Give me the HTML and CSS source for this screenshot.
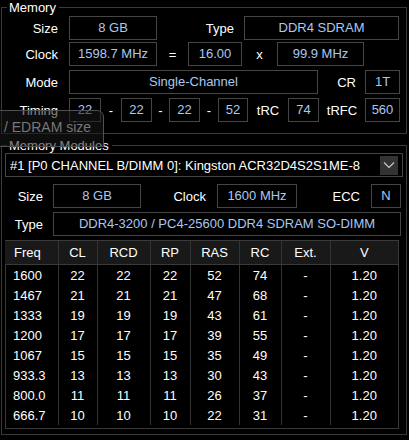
FILE: index.html
```html
<!DOCTYPE html>
<html lang="en">
<head>
    <meta charset="UTF-8">
    <title>Memory</title>
    <link rel="stylesheet" href="styles.css">
</head>
<body>
    <fieldset class="group memory">
        <legend>Memory</legend>
        <div class="row row-size">
            <span class="label lbl-main">Size</span>
            <span class="field w88">8 GB</span>
            <span class="label w77">Type</span>
            <span class="field w155 ml10">DDR4 SDRAM</span>
        </div>
        <div class="row row-clock">
            <span class="label lbl-main">Clock</span>
            <span class="field w88">1598.7 MHz</span>
            <span class="sep w31">=</span>
            <span class="field w54">16.00</span>
            <span class="sep w35">x</span>
            <span class="field w87">99.9 MHz</span>
        </div>
        <div class="row row-mode">
            <span class="label lbl-main">Mode</span>
            <span class="field w249">Single-Channel</span>
            <span class="label w38">CR</span>
            <span class="field w35 ml9">1T</span>
        </div>
        <div class="row row-timing">
            <span class="label lbl-main">Timing</span>
            <span class="field w32">22</span>
            <span class="sep w20">-</span>
            <span class="field w31">22</span>
            <span class="sep w17">-</span>
            <span class="field w31">22</span>
            <span class="sep w18">-</span>
            <span class="field w30">52</span>
            <span class="sep w40">tRC</span>
            <span class="field w31">74</span>
            <span class="sep w46">tRFC</span>
            <span class="field w35">560</span>
        </div>
    </fieldset>

    <fieldset class="group modules">
        <legend>Memory Modules</legend>
        <div class="select">
            <span class="select-text">#1 [P0 CHANNEL B/DIMM 0]: Kingston ACR32D4S2S1ME-8</span>
            <span class="select-btn">
                <svg width="12" height="8" viewBox="0 0 12 8"><path d="M1 1.5 L6 6.5 L11 1.5" fill="none" stroke="#c8c8c8" stroke-width="1.2"/></svg>
            </span>
        </div>
        <div class="row row-msize">
            <span class="label lbl-mod">Size</span>
            <span class="field w88">8 GB</span>
            <span class="label w65">Clock</span>
            <span class="field w80 ml11">1600 MHz</span>
            <span class="label w63">ECC</span>
            <span class="field w30 ml11">N</span>
        </div>
        <div class="row row-mtype">
            <span class="label lbl-mod">Type</span>
            <span class="field w348">DDR4-3200 / PC4-25600 DDR4 SDRAM SO-DIMM</span>
        </div>
        <div class="timings">
            <table>
                <colgroup>
                    <col style="width:53px"><col style="width:39px"><col style="width:53px"><col style="width:40px">
                    <col style="width:49px"><col style="width:42px"><col style="width:49px"><col style="width:68px">
                </colgroup>
                <thead>
                    <tr><th class="first">Freq</th><th>CL</th><th>RCD</th><th>RP</th><th>RAS</th><th>RC</th><th>Ext.</th><th>V</th></tr>
                </thead>
                <tbody>
                    <tr><td class="first">1600</td><td>22</td><td>22</td><td>22</td><td>52</td><td>74</td><td>-</td><td>1.20</td></tr>
                    <tr><td class="first">1467</td><td>21</td><td>21</td><td>21</td><td>47</td><td>68</td><td>-</td><td>1.20</td></tr>
                    <tr><td class="first">1333</td><td>19</td><td>19</td><td>19</td><td>43</td><td>61</td><td>-</td><td>1.20</td></tr>
                    <tr><td class="first">1200</td><td>17</td><td>17</td><td>17</td><td>39</td><td>55</td><td>-</td><td>1.20</td></tr>
                    <tr><td class="first">1067</td><td>15</td><td>15</td><td>15</td><td>35</td><td>49</td><td>-</td><td>1.20</td></tr>
                    <tr><td class="first">933.3</td><td>13</td><td>13</td><td>13</td><td>30</td><td>43</td><td>-</td><td>1.20</td></tr>
                    <tr><td class="first">800.0</td><td>11</td><td>11</td><td>11</td><td>26</td><td>37</td><td>-</td><td>1.20</td></tr>
                    <tr><td class="first">666.7</td><td>10</td><td>10</td><td>10</td><td>22</td><td>31</td><td>-</td><td>1.20</td></tr>
                </tbody>
            </table>
        </div>
    </fieldset>

    <div class="ghost">/ EDRAM size</div>
</body>
</html>
```

FILE: styles.css
```css
body {
    margin: 0;
    background-color: #000;
    color: #fff;
    font-family: "Liberation Sans", Arial, sans-serif;
    font-size: 13px;
    width: 409px;
    height: 440px;
    overflow: hidden;
    position: relative;
}
.group {
    margin: 0 2px 0 1px;
    padding: 0;
    border: 1px solid #3a3a3a;
    min-width: 0;
}
.group legend {
    margin-left: 5px;
    padding: 0 3px 0 2px;
    line-height: 15px;
}
.memory {
    height: 134px;
    box-sizing: border-box;
}
.modules {
    margin-top: 4px;
    height: 297px;
    box-sizing: border-box;
}
.row {
    display: flex;
    align-items: center;
    height: 24px;
}
.row-size { margin-top: 1px; }
.row-clock { margin-top: 2px; }
.row-mode { margin-top: 4px; }
.row-timing { margin-top: 4px; }
.label {
    text-align: right;
    flex: none;
}
.lbl-main {
    width: 56px;
    margin-right: 11px;
}
.lbl-mod {
    width: 41px;
    margin-right: 10px;
}
.field {
    flex: none;
    box-sizing: border-box;
    height: 24px;
    line-height: 22px;
    border: 1px solid #454545;
    color: #a8c8f2;
    text-align: center;
    white-space: nowrap;
}
.sep {
    flex: none;
    text-align: center;
}
.ml9 { margin-left: 9px; }
.ml10 { margin-left: 10px; }
.ml11 { margin-left: 11px; }
.w17 { width: 17px; }
.w18 { width: 18px; }
.w20 { width: 20px; }
.w30 { width: 30px; }
.w31 { width: 31px; }
.w32 { width: 32px; }
.w35 { width: 35px; }
.w38 { width: 38px; }
.w40 { width: 40px; }
.w46 { width: 46px; }
.w54 { width: 54px; }
.w63 { width: 63px; }
.w65 { width: 65px; }
.w77 { width: 77px; }
.w80 { width: 80px; }
.w87 { width: 87px; }
.w88 { width: 88px; }
.w155 { width: 155px; }
.w249 { width: 249px; }
.w348 { width: 348px; }

.select {
    display: flex;
    align-items: center;
    justify-content: space-between;
    box-sizing: border-box;
    height: 24px;
    margin: 0 3px 0 3px;
    padding: 0 4px 0 4px;
    border: 1px solid #454545;
}
.select-btn {
    display: flex;
    align-items: center;
    justify-content: center;
    width: 18px;
    height: 19px;
    background-color: #333;
}
.row-msize { margin-top: 7px; }
.row-mtype { margin-top: 4px; }

.timings {
    margin: 4px 7px 0 3px;
    height: 189px;
    box-sizing: border-box;
    border: 1px solid #3a3a3a;
}
table {
    border-collapse: collapse;
    table-layout: fixed;
    width: 393px;
    margin: -1px 0 0 -1px;
}
th, td {
    padding: 0;
    text-align: center;
    border-left: 1px solid #333;
    white-space: nowrap;
}
th {
    height: 23px;
    font-weight: normal;
    background-color: #191919;
    border-top: 1px solid #3a3a3a;
    border-bottom: 1px solid #3a3a3a;
}
td {
    height: 20px;
}
.first {
    text-align: left;
    padding-left: 9px;
}
td.first {
    padding-left: 8px;
}
th:first-child, td:first-child {
    border-left: none;
}

.ghost {
    position: absolute;
    left: -1px;
    top: 110px;
    width: 105px;
    height: 37px;
    box-sizing: border-box;
    padding: 8px 0 0 4px;
    border: 1px solid #505050;
    border-radius: 0 7px 0 0;
    background-color: rgba(24, 24, 24, 0.55);
    color: #777;
    font-size: 14px;
    line-height: 16px;
    white-space: nowrap;
    overflow: hidden;
}
```
